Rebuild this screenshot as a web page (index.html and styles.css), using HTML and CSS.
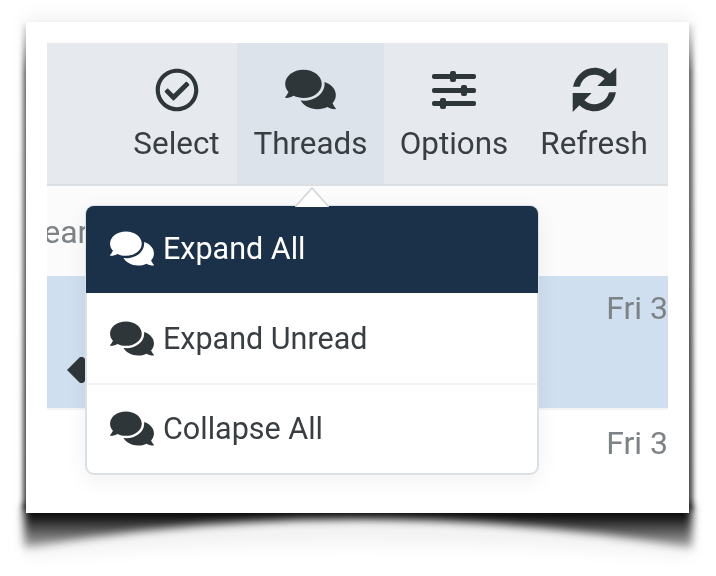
FILE: index.html
```html
<!DOCTYPE html>
<html lang="en">
<head>
<meta charset="utf-8">
<title>Threads menu</title>
<link rel="stylesheet" href="styles.css">
</head>
<body>
<svg class="paper-shadow" width="716" height="576" viewBox="0 0 716 576" aria-hidden="true">
  <defs>
    <filter id="soft" x="-5%" y="-5%" width="110%" height="110%"><feGaussianBlur stdDeviation="2.5"/></filter>
    <filter id="low" x="-5%" y="-20%" width="110%" height="140%"><feGaussianBlur stdDeviation="4"/></filter>
    <filter id="wide" x="-5%" y="-5%" width="110%" height="110%"><feGaussianBlur stdDeviation="8"/></filter>
    <linearGradient id="sideFade" gradientUnits="userSpaceOnUse" x1="0" y1="24" x2="0" y2="510">
      <stop offset="0" stop-color="#000" stop-opacity=".08"/>
      <stop offset=".1" stop-color="#000" stop-opacity=".58"/>
      <stop offset="1" stop-color="#000" stop-opacity=".72"/>
    </linearGradient>
    <linearGradient id="lowFade" gradientUnits="userSpaceOnUse" x1="0" y1="512" x2="0" y2="552">
      <stop offset="0" stop-color="#000" stop-opacity="1"/>
      <stop offset=".4" stop-color="#000" stop-opacity=".68"/>
      <stop offset="1" stop-color="#000" stop-opacity=".2"/>
    </linearGradient>
  </defs>
  <path class="glow" d="M26 16H690V556Q358 530 26 556Z" filter="url(#wide)"/>
  <path fill="url(#sideFade)" d="M23 24H693V510H23Z" filter="url(#soft)"/>
  <path fill="url(#lowFade)" d="M24 505H692V548Q358 490 24 548Z" filter="url(#low)"/>
</svg>
<main class="card">
  <div class="panel">
    <nav class="toolbar">
      <button class="tool">
        <svg class="ico ico-check" viewBox="0 0 512 512"><path d="M256 8C119 8 8 119 8 256s111 248 248 248 248-111 248-248S393 8 256 8zm0 48c110.532 0 200 89.451 200 200 0 110.532-89.451 200-200 200-110.532 0-200-89.451-200-200 0-110.532 89.451-200 200-200m140.204 130.267l-22.536-22.718c-4.667-4.705-12.265-4.736-16.97-.068L215.346 303.697l-59.792-60.277c-4.667-4.705-12.265-4.736-16.97-.069l-22.719 22.536c-4.705 4.667-4.736 12.265-.068 16.971l90.781 91.516c4.667 4.705 12.265 4.736 16.97.068l172.589-171.204c4.704-4.668 4.734-12.266.067-16.971z"/></svg>
        <span>Select</span>
      </button>
      <button class="tool tool-active">
        <svg class="ico ico-comments" viewBox="0 0 576 512"><path d="M416 192c0-88.4-93.1-160-208-160S0 103.6 0 192c0 34.3 14.1 65.9 38 92-13.4 30.2-35.5 54.2-35.8 54.5-2.2 2.3-2.8 5.7-1.5 8.7S4.8 352 8 352c36.6 0 66.9-12.3 88.7-25 32.2 15.7 70.3 25 111.3 25 114.9 0 208-71.6 208-160zm122 220c23.9-26 38-57.7 38-92 0-66.9-53.5-124.2-129.3-148.1.9 6.6 1.3 13.3 1.3 20.1 0 105.9-107.7 192-240 192-10.8 0-21.3-.8-31.7-1.9C207.8 439.6 281.8 480 368 480c41 0 79.1-9.2 111.3-25 21.8 12.7 52.1 25 88.7 25 3.2 0 6.1-1.9 7.3-4.8 1.3-2.9.7-6.3-1.5-8.7-.3-.3-22.4-24.2-35.8-54.5z"/></svg>
        <span>Threads</span>
      </button>
      <button class="tool">
        <svg class="ico ico-sliders" viewBox="0 0 44 38"><rect x="0" y="3" width="44" height="5" rx="2"/><rect x="18" y="0" width="6" height="11" rx="2"/><rect x="0" y="17" width="44" height="5" rx="2"/><rect x="29" y="14" width="6" height="11" rx="2"/><rect x="0" y="30" width="44" height="5" rx="2"/><rect x="8" y="27" width="6" height="11" rx="2"/></svg>
        <span>Options</span>
      </button>
      <button class="tool">
        <svg class="ico ico-sync" viewBox="0 0 512 512"><path d="M370.72 133.28C339.458 104.008 298.888 87.962 255.848 88c-77.458.068-144.328 53.178-162.791 126.85-1.344 5.363-6.122 9.15-11.651 9.15H12c21.6-115 122.8-216 244-216 66.448 0 126.791 26.136 171.315 68.685L504 8V216H288zM8 296H224l-82.97 82.721c31.262 29.273 71.835 45.319 114.876 45.28 77.418-.07 144.315-53.144 162.787-126.849 1.344-5.363 6.122-9.15 11.651-9.15H500C478.067 417.076 377.187 504 256 504c-66.448 0-126.791-26.136-171.315-68.685L8 512z"/></svg>
        <span>Refresh</span>
      </button>
    </nav>
    <section class="row row-search"><span class="search-text">Year</span></section>
    <section class="row row-selected">
      <span class="date">Fri 3</span>
      <svg class="back" viewBox="0 0 20 26"><path d="M0 13L13 0h3l4 4v18l-4 4h-3z"/></svg>
    </section>
    <section class="row row-plain"><span class="date">Fri 3</span></section>
  </div>

  <div class="menu">
    <svg class="caret" width="34" height="20" viewBox="0 0 34 20"><path d="M0 20L17 1l17 19"/></svg>
    <a class="menu-item menu-item-active">
      <svg class="menu-ico" viewBox="0 0 576 512"><path d="M416 192c0-88.4-93.1-160-208-160S0 103.6 0 192c0 34.3 14.1 65.9 38 92-13.4 30.2-35.5 54.2-35.8 54.5-2.2 2.3-2.8 5.7-1.5 8.7S4.8 352 8 352c36.6 0 66.9-12.3 88.7-25 32.2 15.7 70.3 25 111.3 25 114.9 0 208-71.6 208-160zm122 220c23.9-26 38-57.7 38-92 0-66.9-53.5-124.2-129.3-148.1.9 6.6 1.3 13.3 1.3 20.1 0 105.9-107.7 192-240 192-10.8 0-21.3-.8-31.7-1.9C207.8 439.6 281.8 480 368 480c41 0 79.1-9.2 111.3-25 21.8 12.7 52.1 25 88.7 25 3.2 0 6.1-1.9 7.3-4.8 1.3-2.9.7-6.3-1.5-8.7-.3-.3-22.4-24.2-35.8-54.5z"/></svg>
      <span>Expand All</span>
    </a>
    <a class="menu-item">
      <svg class="menu-ico" viewBox="0 0 576 512"><path d="M416 192c0-88.4-93.1-160-208-160S0 103.6 0 192c0 34.3 14.1 65.9 38 92-13.4 30.2-35.5 54.2-35.8 54.5-2.2 2.3-2.8 5.7-1.5 8.7S4.8 352 8 352c36.6 0 66.9-12.3 88.7-25 32.2 15.7 70.3 25 111.3 25 114.9 0 208-71.6 208-160zm122 220c23.9-26 38-57.7 38-92 0-66.9-53.5-124.2-129.3-148.1.9 6.6 1.3 13.3 1.3 20.1 0 105.9-107.7 192-240 192-10.8 0-21.3-.8-31.7-1.9C207.8 439.6 281.8 480 368 480c41 0 79.1-9.2 111.3-25 21.8 12.7 52.1 25 88.7 25 3.2 0 6.1-1.9 7.3-4.8 1.3-2.9.7-6.3-1.5-8.7-.3-.3-22.4-24.2-35.8-54.5z"/></svg>
      <span>Expand Unread</span>
    </a>
    <a class="menu-item menu-item-last">
      <svg class="menu-ico" viewBox="0 0 576 512"><path d="M416 192c0-88.4-93.1-160-208-160S0 103.6 0 192c0 34.3 14.1 65.9 38 92-13.4 30.2-35.5 54.2-35.8 54.5-2.2 2.3-2.8 5.7-1.5 8.7S4.8 352 8 352c36.6 0 66.9-12.3 88.7-25 32.2 15.7 70.3 25 111.3 25 114.9 0 208-71.6 208-160zm122 220c23.9-26 38-57.7 38-92 0-66.9-53.5-124.2-129.3-148.1.9 6.6 1.3 13.3 1.3 20.1 0 105.9-107.7 192-240 192-10.8 0-21.3-.8-31.7-1.9C207.8 439.6 281.8 480 368 480c41 0 79.1-9.2 111.3-25 21.8 12.7 52.1 25 88.7 25 3.2 0 6.1-1.9 7.3-4.8 1.3-2.9.7-6.3-1.5-8.7-.3-.3-22.4-24.2-35.8-54.5z"/></svg>
      <span>Collapse All</span>
    </a>
  </div>
</main>
</body>
</html>
```

FILE: styles.css
```css
* { box-sizing: border-box; }

html, body {
  margin: 0;
  height: 576px;
  overflow: hidden;
  background: #fff;
}

body {
  padding: 22px 0 0 26px;
  position: relative;
  font-family: Roboto, "Liberation Sans", sans-serif;
  color: #383e42;
}

.paper-shadow {
  position: absolute;
  left: 0;
  top: 0;
}

.glow { fill: rgba(0, 0, 0, .05); }

.card {
  position: relative;
  width: 663px;
  height: 491px;
  padding: 21px;
  background: #fff;
  filter: blur(.55px);
}

.panel {
  height: 100%;
  overflow: hidden;
  display: flex;
  flex-direction: column;
}

.toolbar {
  display: flex;
  justify-content: flex-end;
  height: 143px;
  padding-right: 4px;
  background: #e6eaee;
  border-bottom: 2px solid #dcdfe2;
}

.tool {
  display: flex;
  flex-direction: column;
  align-items: center;
  width: 140px;
  height: 141px;
  padding: 0;
  border: 0;
  background: transparent;
  color: inherit;
  font: inherit;
  font-size: 31.4px;
  line-height: 36px;
}

.tool:first-child { width: 121px; }
.tool-active { width: 147px; background: #dde3ea; }

.tool span { margin-top: auto; margin-bottom: 22px; }

.ico { fill: #2f3639; display: block; }
.ico-check { width: 44px; height: 44px; margin-top: 25px; }
.ico-comments { width: 51px; height: 45px; margin-top: 24px; }
.ico-sliders { width: 44px; height: 38px; margin-top: 28px; }
.ico-sync { width: 45px; height: 45px; margin-top: 24px; }

.row {
  position: relative;
  display: flex;
  justify-content: flex-end;
  flex: none;
  font-size: 32px;
  line-height: 36px;
  color: #7c8285;
}

.row-search {
  height: 90px;
  background: #fbfbfb;
  justify-content: flex-start;
  align-items: flex-start;
  padding-top: 28px;
}

.search-text { margin-left: -22px; }

.row-selected {
  height: 134px;
  background: #cfdfef;
  border-bottom: 2px solid #f2f4f6;
  padding-top: 14px;
}

.row-plain { height: 83px; padding-top: 15px; }

.back {
  position: absolute;
  left: 20px;
  top: 81px;
  width: 20px;
  height: 26px;
  fill: #2f3639;
}

.menu {
  position: absolute;
  left: 59px;
  top: 183px;
  width: 454px;
  height: 270px;
  background: #fff;
  border: 2px solid #d9e1e7;
  border-radius: 9px;
  box-shadow: 0 6px 22px rgba(0, 0, 0, .06);
  display: flex;
  flex-direction: column;
}

.caret {
  position: absolute;
  left: 208px;
  top: -20px;
  fill: #fff;
  stroke: #cfd3d6;
  stroke-width: 1.5;
}

.menu-item {
  display: flex;
  align-items: center;
  height: 92px;
  flex: none;
  padding-left: 23px;
  font-size: 30.5px;
  color: #383e42;
  border-bottom: 2px solid #f0f2f4;
}

.menu-item-active {
  height: 87px;
  margin: -1px -1px 0;
  padding-left: 24px;
  padding-bottom: 2px;
  color: #fff;
  background: #1b3049;
  border-bottom: 0;
  border-radius: 8px 8px 0 0;
}

.menu-item-last { border-bottom: 0; height: 87px; }

.menu-ico {
  width: 44px;
  height: 39px;
  margin-right: 9px;
  fill: #2f3639;
  flex: none;
}

.menu-item-active .menu-ico { fill: #fff; }
```
